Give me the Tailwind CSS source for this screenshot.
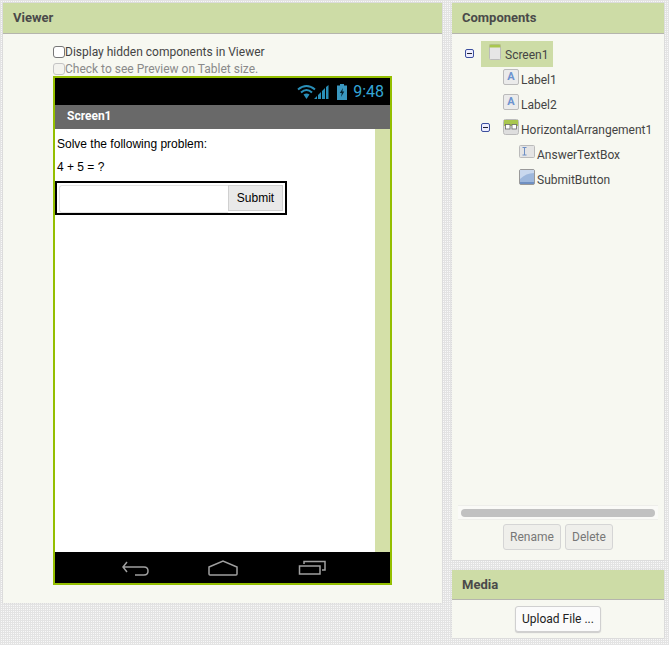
<!DOCTYPE html>
<html lang="en">
<head>
<meta charset="UTF-8">
<title>Viewer</title>
<script src="https://cdn.jsdelivr.net/npm/@tailwindcss/browser@4"></script>
</head>
<body class="w-[669px] h-[645px] overflow-hidden bg-[#f8f8f8] bg-[linear-gradient(#e3e3e3_1px,transparent_1px),linear-gradient(90deg,#e3e3e3_1px,transparent_1px)] bg-[length:2px_2px] font-['Roboto',sans-serif] text-[#444]">
<div class="flex gap-[10px] pt-[3px] pl-[3px]">

  <!-- viewer -->
  <section class="w-[439px] h-[600px] bg-[#f7f8f1] shadow-[0_0_1px_#bbb]">
    <h2 class="h-[31px] pl-[10px] bg-[#cddca6] border-b border-[#b5b5ad] text-[13px] font-bold leading-[30px] text-[#4a4a4a]">Viewer</h2>
    <div class="pl-[50px]">
      <label class="flex items-center h-[17px] mt-[9px] text-[12px] text-[#444]">
        <span class="w-[12px] h-[12px] bg-white border border-[#777] rounded-[3px]"></span>Display hidden components in Viewer
      </label>
      <label class="flex items-center h-[17px] text-[12px] text-[#8a8a8a]">
        <span class="w-[12px] h-[12px] bg-[#f3f3ee] border border-[#c4c4c4] rounded-[3px]"></span>Check to see Preview on Tablet size.
      </label>
      <!-- phone -->
      <div class="w-[339px] h-[509px] mt-[-1px] border-2 border-[#94bf00] flex flex-col font-['Liberation_Sans',sans-serif]">
        <div class="h-[27px] bg-black flex items-center justify-end pr-[6px]">
          <svg width="33" height="16" viewBox="0 0 33 16" class="mr-[7px]">
            <path d="M1 5.500 Q9.500 -1.500 18 5.500 M4 8.500 Q9.500 3.500 15 8.500" fill="none" stroke="#2a8fb8" stroke-width="2"/>
            <path d="M6.500 10.500 Q9.500 8.500 12.500 10.500 L9.500 15 Z" fill="#2a8fb8"/>
            <path d="M17 15 L20 12 V15 Z M21 15 V11 L24 8 V15 Z M25 15 V7 L28 4 V15 Z M29 15 V3 L31.500 1 V15 Z" fill="#2a8fb8"/>
          </svg>
          <svg width="10" height="16" viewBox="0 0 10 16" class="mr-[6px]">
            <path d="M3 0 H7 V1.500 H10 V16 H0 V1.500 H3 Z" fill="#3a97bf"/>
            <path d="M6 4 L2.800 9 H4.800 L4 13 L7.300 7.500 H5.300 Z" fill="#06222e"/>
          </svg>
          <span class="text-[16px] leading-none text-[#34a6d6] font-['Roboto',sans-serif]">9:48</span>
        </div>
        <div class="h-[24px] bg-[#696969] pl-[12px] text-[12px] font-bold leading-[23px] text-white font-['Roboto',sans-serif]">Screen1</div>
        <div class="h-[423px] bg-white flex">
          <div class="w-[320px] text-[12px] text-black">
            <p class="pl-[2px] pt-[8px] leading-[14px]">Solve the following problem:</p>
            <p class="pl-[2px] mt-[9px] leading-[14px]">4 + 5 = ?</p>
            <div class="w-[232px] h-[34px] mt-[7px] border-2 border-black flex items-start pt-[2px] pl-[2px] overflow-hidden">
              <div class="w-[169px] h-[28px] bg-white border border-[#e3e3e3] border-r-0 rounded-l-[3px]"></div>
              <div class="w-[55px] h-[26px] bg-[#e9e9e9] border border-[#d0d0d0] text-center leading-[24px] text-[12px] text-black">Submit</div>
            </div>
          </div>
          <div class="w-[15px] bg-[#d4e0a8]"></div>
        </div>
        <div class="flex-1 bg-black flex items-center pl-[67px]">
          <svg width="27" height="16" viewBox="0 0 27 16" class="mr-[59px]" fill="none" stroke="#a0a0a0" stroke-width="1.500">
            <path d="M5 2 L1 7 L5 12 M1 7 H22 Q26 7 26 11 Q26 15 22 15 H13"/>
          </svg>
          <svg width="30" height="16" viewBox="0 0 30 16" class="mr-[60px]" fill="none" stroke="#a0a0a0" stroke-width="1.500">
            <path d="M1 7 L15 1 L29 7 V14 Q29 15 28 15 H2 Q1 15 1 14 Z"/>
          </svg>
          <svg width="28" height="15" viewBox="0 0 28 15" fill="none" stroke="#a0a0a0" stroke-width="1.500">
            <path d="M1.500 6 H22 V14 H1.500 Z M6 4 V1.500 H27 V10 H24"/>
          </svg>
        </div>
      </div>
    </div>
  </section>

  <div class="w-[212px] flex flex-col gap-[10px]">
    <!-- components -->
    <section class="h-[557px] bg-[#f7f8f1] shadow-[0_0_1px_#bbb] flex flex-col">
      <h2 class="h-[31px] pl-[10px] bg-[#cddca6] border-b border-[#b5b5ad] text-[13px] font-bold leading-[30px] text-[#4a4a4a]">Components</h2>
      <div class="flex-1 text-[12px] text-[#444] pt-[7px]">
        <div class="flex items-center h-[25px] pl-[13px]">
          <span class="w-[9px] h-[9px] border border-[#3c4f9e] rounded-[2px] bg-[#eef] flex items-center justify-center"><span class="w-[5px] h-[1px] bg-[#223]"></span></span>
          <div class="ml-[7px] w-[72px] h-[26px] bg-[#cddca6] flex items-center pl-[8px]">
            <svg width="12" height="16" viewBox="0 0 12 16" class="mb-[3px]"><rect x="0.500" y="0.500" width="11" height="15" rx="1" fill="#e6e6e6" stroke="#bbb"/><rect x="0.500" y="0.500" width="11" height="3" fill="#a9c74f"/></svg>
            <span class="ml-[4px] mt-[2px]">Screen1</span>
          </div>
        </div>
        <div class="flex items-center h-[25px] pl-[51px]">
          <span class="w-[16px] h-[16px] mb-[3px] bg-[#ebebeb] border border-[#bbb] rounded-[2px] text-center text-[11px] font-bold leading-[13px] text-[#6d93cf]">A</span>
          <span class="ml-[2px] mt-[2px]">Label1</span>
        </div>
        <div class="flex items-center h-[25px] pl-[51px]">
          <span class="w-[16px] h-[16px] mb-[3px] bg-[#ebebeb] border border-[#bbb] rounded-[2px] text-center text-[11px] font-bold leading-[13px] text-[#6d93cf]">A</span>
          <span class="ml-[2px] mt-[2px]">Label2</span>
        </div>
        <div class="flex items-center h-[25px] pl-[29px]">
          <span class="w-[9px] h-[9px] mb-[3px] border border-[#3c4f9e] rounded-[2px] bg-[#eef] flex items-center justify-center"><span class="w-[5px] h-[1px] bg-[#223]"></span></span>
          <svg width="16" height="16" viewBox="0 0 16 16" class="ml-[13px] mb-[3px]"><rect x="0.500" y="0.500" width="15" height="15" rx="2" fill="#dedede" stroke="#bbb"/><rect x="1" y="1" width="14" height="6" fill="#a9c74f"/><rect x="2.500" y="5.500" width="4.500" height="4.500" fill="#fff" stroke="#666" stroke-width="0.800"/><rect x="9" y="5.500" width="4.500" height="4.500" fill="#fff" stroke="#666" stroke-width="0.800"/></svg>
          <span class="ml-[2px] mt-[2px]">HorizontalArrangement1</span>
        </div>
        <div class="flex items-center h-[25px] pl-[67px]">
          <svg width="16" height="13" viewBox="0 0 16 13" class="mb-[5px]"><rect x="0.500" y="0.500" width="15" height="12" rx="1" fill="#e4e4e4" stroke="#bbb"/><path d="M3.500 2.500 H7.500 M5.500 2.500 V10 M3.500 10 H7.500" stroke="#6d8fc4" stroke-width="1" fill="none"/></svg>
          <span class="ml-[2px] mt-[2px]">AnswerTextBox</span>
        </div>
        <div class="flex items-center h-[25px] pl-[67px]">
          <svg width="16" height="16" viewBox="0 0 16 16" class="mb-[4px]"><rect x="0.500" y="0.500" width="15" height="15" rx="1.500" fill="#9db7dc" stroke="#999"/><path d="M1 1 H15 V4 Q7 4 1 10 Z" fill="#c9d8ee"/><rect x="1" y="13" width="14" height="2" fill="#6f90c2"/></svg>
          <span class="ml-[2px] mt-[2px]">SubmitButton</span>
        </div>
      </div>
      <div class="h-[15px] mx-[6px] border-y border-[#eeeeea] bg-[#fafaf7] flex items-center px-[3px]">
        <div class="w-full h-[8px] rounded-full bg-[#c1c1c1]"></div>
      </div>
      <div class="flex justify-center gap-[4px] mt-[4px] mb-[10px] text-[12px] text-[#777]">
        <div class="w-[58px] h-[26px] bg-[#efefeb] border border-[#d5d5d5] rounded-[3px] text-center leading-[24px]">Rename</div>
        <div class="w-[48px] h-[26px] bg-[#efefeb] border border-[#d5d5d5] rounded-[3px] text-center leading-[24px]">Delete</div>
      </div>
    </section>
    <!-- media -->
    <section class="h-[68px] bg-[#f7f8f1] shadow-[0_0_1px_#bbb]">
      <h2 class="h-[30px] pl-[10px] bg-[#cddca6] border-b border-[#b5b5ad] text-[13px] font-bold leading-[29px] text-[#4a4a4a]">Media</h2>
      <div class="flex justify-center pt-[6px]">
        <div class="w-[86px] h-[26px] bg-[#fbfbfb] border border-[#d0d0d0] rounded-[3px] shadow-[0_1px_1px_#ccc] text-center text-[12px] leading-[24px] text-[#222]">Upload File ...</div>
      </div>
    </section>
  </div>
</div>
</body>
</html>
